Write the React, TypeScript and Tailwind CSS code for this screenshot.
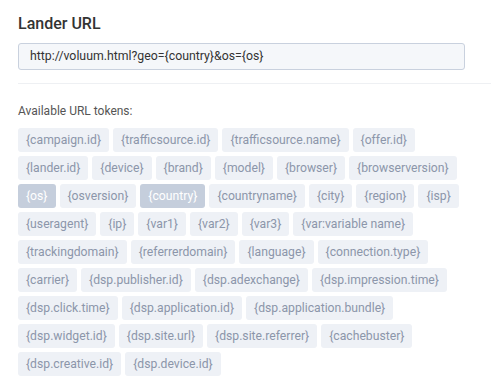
const rows: string[][] = [
  ['campaign.id', 'trafficsource.id', 'trafficsource.name', 'offer.id'],
  ['lander.id', 'device', 'brand', 'model', 'browser', 'browserversion'],
  ['os', 'osversion', 'country', 'countryname', 'city', 'region', 'isp'],
  ['useragent', 'ip', 'var1', 'var2', 'var3', 'var:variable name'],
  ['trackingdomain', 'referrerdomain', 'language', 'connection.type'],
  ['carrier', 'dsp.publisher.id', 'dsp.adexchange', 'dsp.impression.time'],
  ['dsp.click.time', 'dsp.application.id', 'dsp.application.bundle'],
  ['dsp.widget.id', 'dsp.site.url', 'dsp.site.referrer', 'cachebuster'],
  ['dsp.creative.id', 'dsp.device.id'],
];

const used = new Set(['os', 'country']);

function Token({ name }: { name: string }) {
  const active = used.has(name);
  return (
    <span
      className={
        active
          ? 'h-6 px-2 rounded-[3px] bg-[#c5cedc] text-white text-[12.2px] leading-6 whitespace-nowrap'
          : 'h-6 px-2 rounded-[3px] bg-[#eef1f6] text-[#8c96aa] text-[12.2px] leading-6 whitespace-nowrap'
      }
    >
      {'{' + name + '}'}
    </span>
  );
}

export default function App() {
  return (
    <div className="w-[491px] h-[383px] bg-white overflow-hidden font-['Roboto',sans-serif]">
      <div className="pl-[18px] pt-[14px]">
        <h2 className="text-[16px] font-medium text-[#333] leading-5">Lander URL</h2>
        <div className="mt-[9px] w-[447px] h-[27px] rounded-[3px] border border-[#c9d1de] bg-[#f5f7fa] px-[11px] flex items-center text-[12.3px] text-[#333]">
          http://voluum.html?geo={'{country}'}&os={'{os}'}
        </div>
        <div className="mt-[13px] border-t border-[#eef0f3]" />
        <p className="mt-[19px] text-[12px] text-[#555] leading-4">Available URL tokens:</p>
        <div className="mt-[9px] flex flex-col gap-1">
          {rows.map((row, i) => (
            <div key={i} className="flex gap-1">
              {row.map((t) => (
                <Token key={t} name={t} />
              ))}
            </div>
          ))}
        </div>
      </div>
    </div>
  );
}
